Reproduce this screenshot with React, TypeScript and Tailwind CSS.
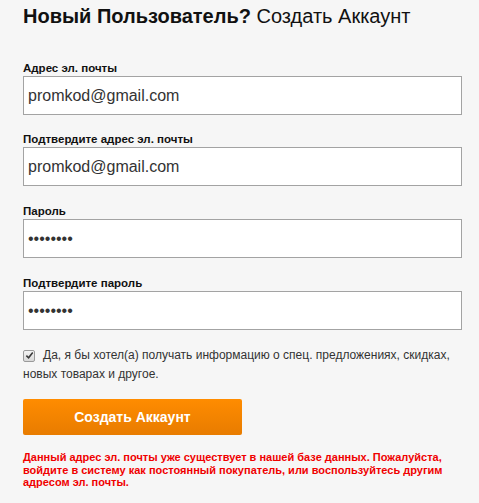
import React, { useState } from 'react';

const Field = ({ label, type, value, gap }: { label: string; type: string; value: string; gap: string }) => (
  <div className={gap}>
    <label className="block text-[11.5px] leading-[14px] font-bold text-[#111] mb-[1px]">{label}</label>
    <input
      type={type}
      defaultValue={value}
      readOnly
      className="block w-[439px] h-[39px] px-[4px] bg-white border border-[#a3a3a3] text-[16px] text-[#333] outline-none"
    />
  </div>
);

export default function App() {
  const [checked, setChecked] = useState(true);

  return (
    <div className="min-h-screen w-[479px] bg-[#f6f6f6] px-[23px] pt-[4px] pb-4" style={{ fontFamily: '"Liberation Sans", Arial, sans-serif' }}>
      <h1 className="text-[20px] leading-[24px] text-[#111] mb-[33px]">
        <span className="font-bold">Новый Пользователь?</span> Создать Аккаунт
      </h1>

      <Field label="Адрес эл. почты" type="text" value="promkod@gmail.com" gap="mb-[17px]" />
      <Field label="Подтвердите адрес эл. почты" type="text" value="promkod@gmail.com" gap="mb-[18px]" />
      <Field label="Пароль" type="password" value="12345678" gap="mb-[18px]" />
      <Field label="Подтвердите пароль" type="password" value="12345678" gap="mb-[16px]" />

      <div className="text-[12px] leading-[19px] text-[#333]">
        <button
          type="button"
          onClick={() => setChecked(!checked)}
          className="inline-flex align-[-1px] items-center justify-center w-[12px] h-[12px] mr-[8px] rounded-[2px] border border-[#9a9a9a] bg-gradient-to-b from-[#f4f4f4] to-[#d8d8d8]"
        >
          {checked && (
            <svg viewBox="0 0 10 10" className="w-[9px] h-[9px]">
              <path d="M1.5 5.2 L4 7.6 L8.6 1.8" fill="none" stroke="#3a3a3a" strokeWidth="1.8" />
            </svg>
          )}
        </button>
        Да, я бы хотел(а) получать информацию о спец. предложениях, скидках, новых товарах и другое.
      </div>

      <button
        type="button"
        className="mt-[15px] w-[219px] h-[36px] rounded-[2px] bg-gradient-to-b from-[#ff8c00] to-[#e87c00] text-white text-[14px] font-bold"
      >
        Создать Аккаунт
      </button>

      <p className="mt-[16px] text-[11px] leading-[12.5px] font-bold text-[#f00000]">
        Данный адрес эл. почты уже существует в нашей базе данных. Пожалуйста, войдите в систему как постоянный покупатель, или воспользуйтесь другим адресом эл. почты.
      </p>
    </div>
  );
}
